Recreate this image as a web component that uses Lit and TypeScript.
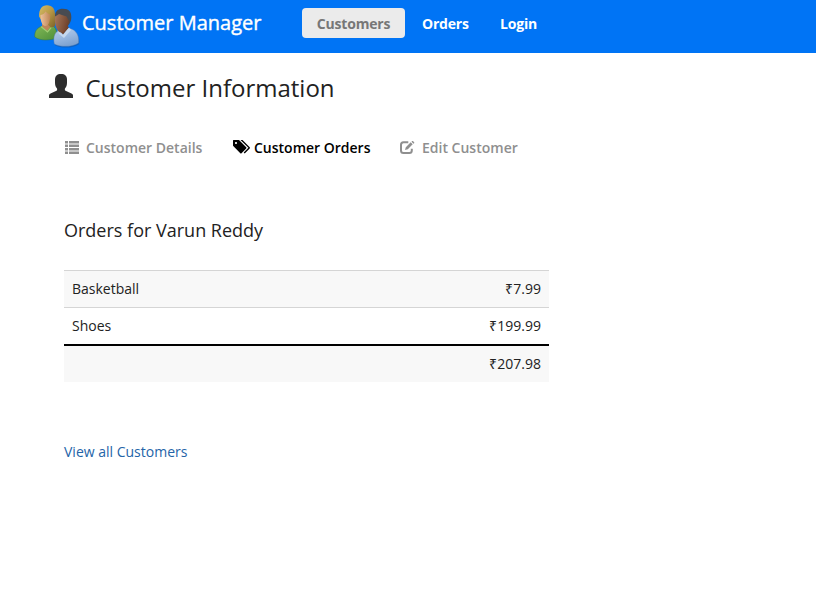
import { LitElement, html, css, svg } from "lit";
import { customElement } from "lit/decorators.js";

const peopleLogo = svg`
<svg viewBox="0 0 46 45" width="46" height="45">
  <defs>
    <linearGradient id="green" x1="0" y1="0" x2="1" y2="1"><stop offset="0" stop-color="#83b957"/><stop offset="1" stop-color="#4d8f3a"/></linearGradient>
    <linearGradient id="blue" x1="0" y1="0" x2="0.4" y2="1"><stop offset="0" stop-color="#b5cdea"/><stop offset="0.5" stop-color="#9dbbe2"/><stop offset="1" stop-color="#7fa3d0"/></linearGradient>
    <linearGradient id="blond" x1="0" y1="0" x2="1" y2="1"><stop offset="0" stop-color="#d6bd68"/><stop offset="0.5" stop-color="#b79845"/><stop offset="1" stop-color="#7d6229"/></linearGradient>
    <linearGradient id="fair" x1="0" y1="0" x2="1" y2="0"><stop offset="0" stop-color="#edc29b"/><stop offset="1" stop-color="#bd8455"/></linearGradient>
    <linearGradient id="brown" x1="0" y1="0" x2="1" y2="0.3"><stop offset="0" stop-color="#a8795c"/><stop offset="1" stop-color="#70432d"/></linearGradient>
  </defs>
  <path d="M.8 34C.5 28.500 2.500 25.500 7 23.500l9-1.500c5 1 7 4 7 13-7 2.500-17 3-22.200-1z" fill="url(#green)" stroke="#3b7835" stroke-width=".5"/>
  <path d="M8 20.500v3.500l5 4 4-5-3-4z" fill="#bf8659"/>
  <path d="M7 23.500l6.500 5.500L18 23.500" fill="none" stroke="#9fce72" stroke-width="1.200"/>
  <path d="M5 13.500C5 6 8 2.200 13 2.200c5.500 0 8 3.500 8 9v12l-4 1.500-3-3-7-5z" fill="url(#blond)"/>
  <path d="M6.500 12c3-.5 4-1.500 5-3.500 1.500 1.700 3.300 2.500 4.800 3-.2 7-1.800 11.500-4.800 11.500-3.500 0-5.200-5.500-5-11z" fill="url(#fair)"/>
  <path d="M20.300 41.500c-1.500-8 .7-12 5.700-14.500l10-1c6 1.500 9.500 7 8.500 14.500-6 4-18 4.500-24.200 1z" fill="#164f98" opacity=".5" transform="translate(.6 .7)"/>
  <path d="M20.300 41c-1.500-8 .7-12 5.700-14.500l10-1c6 1.500 9.500 7 8.500 14.500-6 4-18 4.500-24.200 1z" fill="url(#blue)" stroke="#577fae" stroke-width=".4"/>
  <path d="M24 26l5 5.500 6-7-2.500-3h-7z" fill="#70432d"/>
  <path d="M23.500 27l5.500 5 6-7.500 2 2.500-7 8-5-4z" fill="#c5d8ee"/>
  <path d="M21 13.500C21 8 24 5.700 29 5.700c6 0 8.500 3.300 8.300 8.800 0 3.500-1.300 6-3.300 8z" fill="#484b51"/>
  <path d="M21 13.500c1.500-.7 3-1.500 4-2.500l7.500 2.500c1 1.800 1.800 3.200 2.500 4.500-.7 6.500-3.500 11.500-7.500 11.500-4.800 0-7.200-8-6.500-16z" fill="url(#brown)"/>
</svg>`;

const userIcon = svg`
<svg viewBox="0 0 24 24" width="24" height="24" fill="#2d2d2d">
  <path d="M0 24v-2.500c0-1.200.7-1.800 2-2.300l5.500-2.500c.8-.4.9-1.800.2-2.600C6.500 12.700 6 11 6 8.500V5.500C6 2 8 0 12 0s6 2 6 5.500v3c0 2.500-.5 4.200-1.700 5.600-.7.800-.6 2.200.2 2.600l5.500 2.500c1.300.5 2 1.100 2 2.300V24z"/>
</svg>`;

const listIcon = svg`
<svg viewBox="0 0 14 13" width="14" height="13" fill="#8f8f8f">
  <path d="M0 0h3v2.500H0zM4 0h10v2.500H4zM0 3.500h3V6H0zM4 3.500h10V6H4zM0 7h3v2.500H0zM4 7h10v2.500H4zM0 10.500h3V13H0zM4 10.500h10V13H4z"/>
</svg>`;

const tagsIcon = svg`
<svg viewBox="0 0 18 14" width="18" height="14">
  <path fill-rule="evenodd" d="M.5 0H6l7.200 7.200c.4.400.4.800 0 1.200L8.500 13.200c-.4.400-.8.400-1.200 0L0 5.700V.5C0 .2.200 0 .5 0zm2.500 1.900a1.100 1.100 0 1 0 0 2.200 1.100 1.100 0 0 0 0-2.200z"/>
  <path d="M7.500 0h2l7.200 7.200c.4.400.4.800 0 1.200l-5 5.200-1-1 4.700-4.800z"/>
</svg>`;

const editIcon = svg`
<svg viewBox="0 0 15 13" width="15" height="13">
  <path d="M8.300 1.300H3.500C2 1.300 1 2.300 1 3.800v5.700C1 11 2 12 3.500 12h5.800c1.500 0 2.500-1 2.500-2.500V7.800" fill="none" stroke="#8f8f8f" stroke-width="2"/>
  <path d="M5 9l.8-2.800L10.700 1.300l2 2L7.800 8.200zM11.500.7l.7-.6c.4-.2.700-.1 1 .2l.9.900c.3.300.3.700 0 1l-.6.600z" fill="#8f8f8f"/>
</svg>`;

@customElement("app-root")
export class AppRoot extends LitElement {
  static styles = css`
    :host {
      display: block;
      min-height: 594px;
      background: #fff;
      color: #222;
      font: 14px/20px "Open Sans", sans-serif;
    }
    svg { display: block; flex: none; }
    a { color: inherit; text-decoration: none; white-space: nowrap; }
    header {
      display: flex;
      height: 53px;
      box-sizing: border-box;
      padding-left: 34px;
      background: #0074f5;
      color: #fff;
    }
    .logo { padding-top: 3px; width: 48px; }
    .brand { width: 220px; font-size: 20px; line-height: 46px; -webkit-text-stroke: 0.4px #fff; }
    .menu { display: flex; padding-top: 8px; font-weight: 700; letter-spacing: -0.2px; }
    .menu a { height: 30px; line-height: 31px; box-sizing: border-box; }
    .menu .current { width: 103px; text-align: center; background: #ebebeb; color: #777; border-radius: 4px; }
    .menu .orders { width: 78px; margin-left: 17px; }
    .title { display: flex; padding: 21px 0 0 49px; height: 42px; }
    h1 { margin: -1px 0 0 12.5px; font-size: 24px; line-height: 30px; font-weight: 400; }
    .tabs { display: flex; padding: 22px 0 0 65px; font-weight: 600; color: #8f8f8f; }
    .tabs a { display: flex; }
    .tabs svg { margin-top: 3px; }
    .details { width: 168px; gap: 7px; }
    .active { width: 167px; gap: 3px; color: #000; }
    .active svg { margin-top: 2px; }
    .edit { gap: 7px; }
    main { padding: 60px 0 0 64px; }
    h2 { margin: 0; font-size: 18px; line-height: 24px; font-weight: 400; }
    table { width: 485px; margin-top: 28px; border-collapse: separate; border-spacing: 0; }
    td { height: 36px; padding: 0 8px; border-top: 1px solid #d5d5d5; }
    td:last-child { text-align: right; }
    tr:nth-child(odd) td { background: #f8f8f8; }
    tr.total td { border-top: 2px solid #000; }
    .all { display: block; width: max-content; margin-top: 60px; color: #2464a8; }
  `;

  private orders = [
    { product: "Basketball", cost: "₹7.99" },
    { product: "Shoes", cost: "₹199.99" },
  ];

  render() {
    return html`
      <header>
        <div class="logo">${peopleLogo}</div>
        <a class="brand">Customer Manager</a>
        <nav class="menu">
          <a class="current">Customers</a>
          <a class="orders">Orders</a>
          <a>Login</a>
        </nav>
      </header>
      <div class="title">${userIcon}<h1>Customer Information</h1></div>
      <nav class="tabs">
        <a class="details">${listIcon}<span>Customer Details</span></a>
        <a class="active">${tagsIcon}<span>Customer Orders</span></a>
        <a class="edit">${editIcon}<span>Edit Customer</span></a>
      </nav>
      <main>
        <h2>Orders for Varun Reddy</h2>
        <table>
          <tbody>
            ${this.orders.map((o) => html`<tr><td>${o.product}</td><td>${o.cost}</td></tr>`)}
            <tr class="total"><td></td><td>₹207.98</td></tr>
          </tbody>
        </table>
        <a class="all">View all Customers</a>
      </main>
    `;
  }
}
